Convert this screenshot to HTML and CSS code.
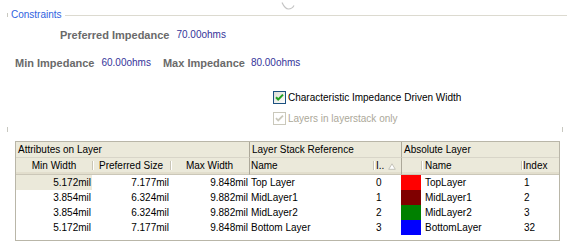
FILE: index.html
```html
<!DOCTYPE html>
<html>
<head>
<meta charset="utf-8">
<link rel="stylesheet" href="styles.css">
</head>
<body>
<div class="page">
  <svg class="chevron" width="14" height="9" viewBox="0 0 14 9"><path d="M1 1.5 Q4 8 7.5 8 Q11 8 13 4.5" fill="none" stroke="#c4c4c4" stroke-width="1.2"/></svg>
  <div class="legend-row"><span class="edge-dot"></span><span class="legend">Constraints</span><span class="rule"></span></div>
  <div class="pref-row"><span class="label">Preferred Impedance</span><span class="value">70.00ohms</span></div>
  <div class="minmax-row"><span class="label">Min Impedance</span><span class="value gap">60.00ohms</span><span class="label">Max Impedance</span><span class="value">80.00ohms</span></div>
  <div class="checks">
    <div class="check">
      <svg class="box" width="13" height="13" viewBox="0 0 13 13"><defs><linearGradient id="g1" x1="0" y1="0" x2="1" y2="1"><stop offset="0" stop-color="#dcdcd4"/><stop offset="1" stop-color="#ffffff"/></linearGradient></defs><rect x="0.5" y="0.5" width="12" height="12" fill="url(#g1)" stroke="#1c5180"/><path d="M3 6.2 L5.2 8.5 L10 3.6" fill="none" stroke="#21a121" stroke-width="2"/></svg>
      <span class="check-text">Characteristic Impedance Driven Width</span>
    </div>
    <div class="check disabled">
      <svg class="box" width="13" height="13" viewBox="0 0 13 13"><rect x="0.5" y="0.5" width="12" height="12" fill="#ffffff" stroke="#cac8bb"/><path d="M3 6.2 L5.2 8.5 L10 3.6" fill="none" stroke="#cac8bb" stroke-width="1.8"/></svg>
      <span class="check-text">Layers in layerstack only</span>
    </div>
  </div>
  <div class="edges"><span class="edge"></span><span class="edge"></span></div>
  <div class="grid">
    <div class="gh span3">Attributes on Layer</div>
    <div class="gh span2 grp">Layer Stack Reference</div>
    <div class="gh span3 grp">Absolute Layer</div>

    <div class="sh center">Min Width</div>
    <div class="sh center sep">Preferred Size</div>
    <div class="sh center sep">Max Width</div>
    <div class="sh grp left">Name</div>
    <div class="sh sep left idx">I.. <svg class="sort" width="8" height="7" viewBox="0 0 8 7"><path d="M4 0.8 L7.3 6.3 L0.7 6.3 Z" fill="#fff" stroke="#c4c2b8"/></svg></div>
    <div class="sh grp"></div>
    <div class="sh sep left name2">Name</div>
    <div class="sh sep left idx2">Index</div>

    <div class="c num focus">5.172mil</div><div class="c num">7.177mil</div><div class="c num">9.848mil</div><div class="c txt">Top Layer</div><div class="c i1">0</div><div class="c sw red"></div><div class="c n2">TopLayer</div><div class="c i2">1</div>
    <div class="c num">3.854mil</div><div class="c num">6.324mil</div><div class="c num">9.882mil</div><div class="c txt">MidLayer1</div><div class="c i1">1</div><div class="c sw maroon"></div><div class="c n2">MidLayer1</div><div class="c i2">2</div>
    <div class="c num">3.854mil</div><div class="c num">6.324mil</div><div class="c num">9.882mil</div><div class="c txt">MidLayer2</div><div class="c i1">2</div><div class="c sw green"></div><div class="c n2">MidLayer2</div><div class="c i2">3</div>
    <div class="c num">5.172mil</div><div class="c num">7.177mil</div><div class="c num">9.848mil</div><div class="c txt">Bottom Layer</div><div class="c i1">3</div><div class="c sw blue"></div><div class="c n2">BottomLayer</div><div class="c i2">32</div>
    <div class="filler"></div>
  </div>
</div>
</body>
</html>
```

FILE: styles.css
```css
* { box-sizing: border-box; }
html, body { margin: 0; padding: 0; background: #ffffff; }
body {
  font-family: "Liberation Sans", Arial, sans-serif;
  font-size: 10px;
  color: #000;
}
.page {
  position: relative;
  width: 571px;
  height: 247px;
  overflow: hidden;
}
.chevron {
  position: absolute;
  left: 281px;
  top: 1px;
}
.legend-row {
  display: flex;
  align-items: center;
  height: 12px;
  margin-top: 9px;
  padding-left: 7px;
  padding-right: 4px;
}
.edge-dot {
  width: 1px;
  height: 4px;
  background: #c8c8c0;
}
.legend {
  margin-left: 3px;
  color: #2f62e0;
  line-height: 12px;
}
.rule {
  flex: 1;
  height: 1px;
  margin-left: 3px;
  background: #dcdad0;
}
.label {
  font-size: 11px;
  font-weight: bold;
  color: #6a6a6a;
  margin-right: 7px;
}
.value {
  color: #34349a;
}
.value.gap { margin-right: 12px; }
.pref-row {
  display: flex;
  align-items: center;
  height: 12px;
  line-height: 12px;
  margin-top: 8px;
  padding-left: 60px;
}
.minmax-row {
  display: flex;
  align-items: center;
  height: 12px;
  line-height: 12px;
  margin-top: 16px;
  padding-left: 15px;
}
.minmax-row .label:nth-child(3) { margin-right: 6px; }
.checks {
  margin-top: 22px;
  padding-left: 273px;
  display: flex;
  flex-direction: column;
  gap: 8px;
}
.check {
  display: flex;
  align-items: center;
  height: 13px;
}
.box { display: block; flex: none; }
.check-text {
  margin-left: 2px;
  line-height: 13px;
  color: #000;
}
.check.disabled .check-text { color: #aca899; }
.edges {
  display: flex;
  justify-content: space-between;
  padding: 0 8px 0 7px;
  margin-top: 2px;
  height: 6px;
}
.edge {
  width: 1px;
  height: 5px;
  background: #c8c8c0;
}
.grid {
  margin-top: 8px;
  margin-left: 15px;
  width: 545px;
  border: 1px solid #b9b6a8;
  display: grid;
  grid-template-columns: 76px 78px 79px 124px 28px 20px 100px 38px;
  grid-template-rows: 16px 17px repeat(4, 15px) 5px;
}
.gh {
  background: #ebe9da;
  border-bottom: 1px solid #d8d5c8;
  line-height: 15px;
  padding-left: 2px;
  white-space: nowrap;
  overflow: hidden;
}
.span3 { grid-column: span 3; }
.span2 { grid-column: span 2; }
.grp { border-left: 1px solid #aca899; }
.sh {
  position: relative;
  background: #ebe9da;
  border-bottom: 1px solid #cbc7b8;
  box-shadow: inset 0 -2px 0 #e2decd;
  line-height: 16px;
  white-space: nowrap;
  overflow: hidden;
}
.sh.center { text-align: center; }
.sh.left { padding-left: 2px; }
.sh.grp.left { padding-left: 1px; }
.sh.sep::before {
  content: "";
  position: absolute;
  left: 0;
  top: 3px;
  bottom: 4px;
  width: 1px;
  background: #c9c5b6;
}
.sh.sep::after {
  content: "";
  position: absolute;
  left: 1px;
  top: 3px;
  bottom: 4px;
  width: 1px;
  background: #ffffff;
}
.sh.idx { padding-left: 3px; }
.sh.name2 { padding-left: 4px; }
.sh.idx2 { padding-left: 2px; }
.sort { vertical-align: -1px; margin-left: 1px; }
.c {
  line-height: 15px;
  white-space: nowrap;
  overflow: hidden;
}
.num { text-align: right; padding-right: 1px; }
.focus { background: #ebe9da; }
.txt { padding-left: 2px; }
.i1 { padding-left: 3px; }
.n2 { padding-left: 4px; }
.i2 { padding-left: 3px; }
.red { background: #ff0000; }
.maroon { background: #800000; }
.green { background: #008000; }
.blue { background: #0000ff; }
.filler { grid-column: span 8; }
```
